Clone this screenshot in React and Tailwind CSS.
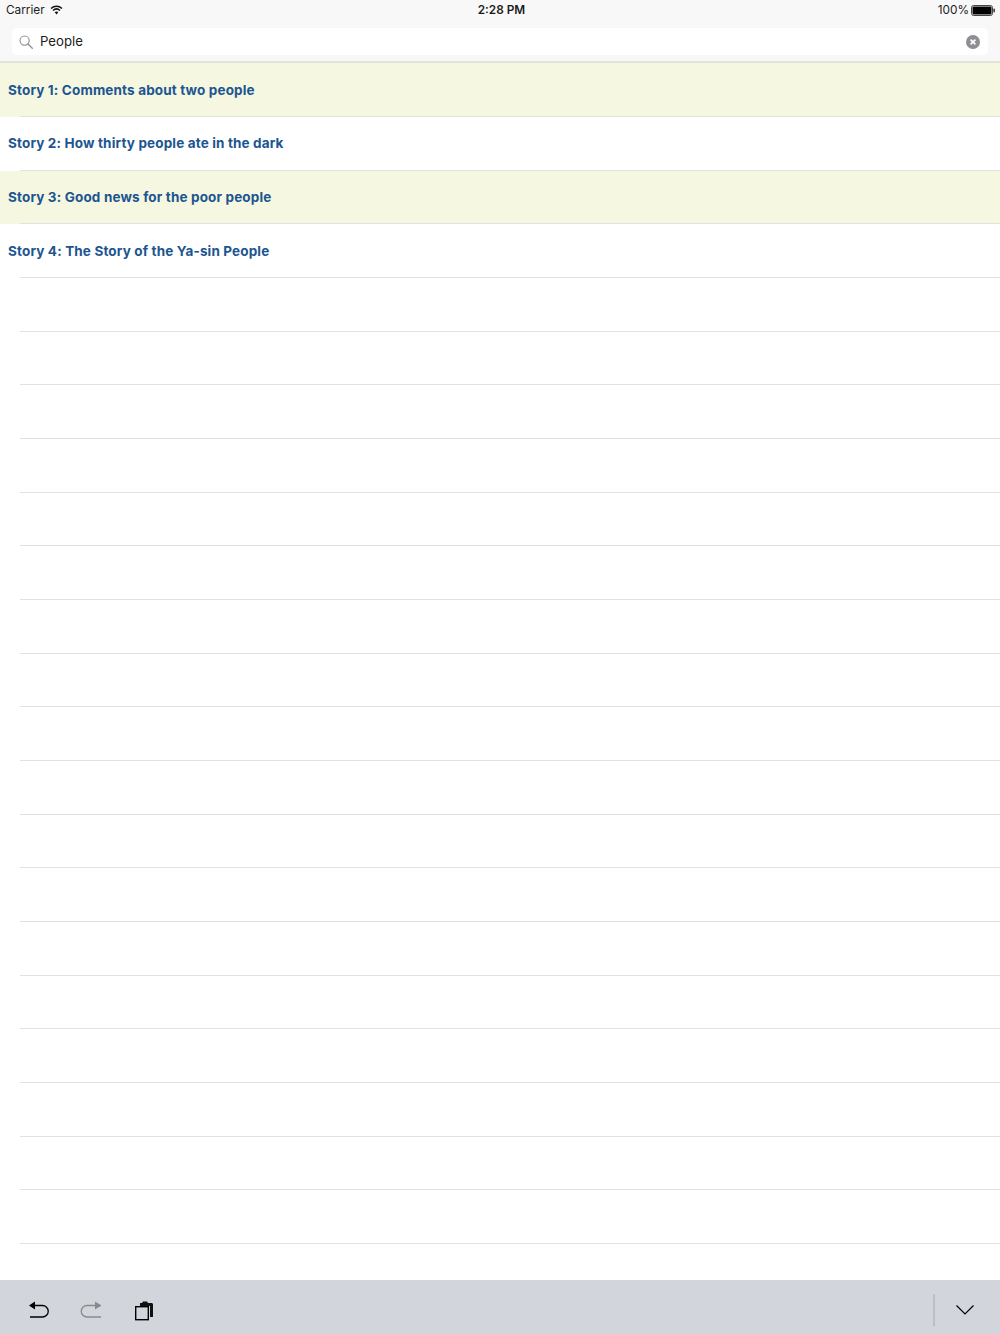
const STORIES = [
  'Story 1: Comments about two people',
  'Story 2: How thirty people ate in the dark',
  'Story 3: Good news for the poor people',
  'Story 4: The Story of the Ya-sin People',
];

// empty rows still draw their separators
const ROWS = Array.from({ length: 22 }, (_, i) => STORIES[i] || '');

function StatusBar() {
  return (
    <div className="flex h-[21px] items-center justify-between pl-[6px] pr-[5px] pt-[1px] text-[11.8px] text-[#1c1c1c]">
      <div className="flex w-[200px] items-center gap-[5px]">
        <span>Carrier</span>
        <svg width="13" height="10" viewBox="0 0 14 11" className="mb-[2px]">
          <path d="M1 3.8C4.400.6 9.600.6 13 3.800" fill="none" stroke="#111" strokeWidth="1.700" />
          <path d="M3.200 6c2.200-2 5.400-2 7.600 0" fill="none" stroke="#111" strokeWidth="1.700" />
          <path d="M5 8c1.100-1 2.900-1 4 0l-2 2.500z" fill="#111" />
        </svg>
      </div>
      <span className="ml-[2px] font-semibold">2:28 PM</span>
      <div className="flex w-[200px] items-center justify-end gap-[2px]">
        <span>100%</span>
        <svg width="24" height="11" viewBox="0 0 24 11" className="mb-[1px]">
          <rect x="0.500" y="0.500" width="21" height="10" rx="2" fill="#fff" stroke="#444" />
          <rect x="1.500" y="1.500" width="19" height="8" rx="1" fill="#000" />
          <rect x="22.400" y="3.500" width="1.500" height="4" rx="0.700" fill="#333" />
        </svg>
      </div>
    </div>
  );
}

function SearchBar() {
  return (
    <div className="border-b-2 border-[#e2e3da] px-[12px] pb-[6.3px] pt-[7px]">
      <div className="flex h-[27px] items-center rounded-[5px] bg-white pl-[7px] pr-[8px]">
        <svg width="14" height="14" viewBox="0 0 14 14">
          <circle cx="5.600" cy="5.600" r="4.600" fill="none" stroke="#8e8e93" strokeWidth="1.100" />
          <path d="M9 9l4.300 4.300" stroke="#8e8e93" strokeWidth="1.300" strokeLinecap="round" />
        </svg>
        <span className="ml-[7px] flex-1 text-[13.2px] text-[#1c1c1c]">People</span>
        <svg width="14" height="14" viewBox="0 0 14 14">
          <circle cx="7" cy="7" r="7" fill="#8e8e93" />
          <path d="M4.600 4.600l4.800 4.800M9.400 4.600l-4.800 4.800" stroke="#fff" strokeWidth="1.700" />
        </svg>
      </div>
    </div>
  );
}

function Row({ title, index }) {
  const shaded = title && index % 2 === 0;
  return (
    <div className={`flex h-[53.68px] shrink-0 flex-col ${shaded ? 'bg-[#f5f7e1]' : 'bg-white'}`}>
      <div className="flex flex-1 items-center pl-[8px] text-[13.5px] font-bold tracking-[0.15px] text-[#1c5590]">
        {title}
      </div>
      <div className="ml-[20px] h-px bg-[#e2e3df]" />
    </div>
  );
}

function Toolbar() {
  return (
    <div className="flex h-[54px] shrink-0 items-center bg-[#d2d5db] pl-[29px] pr-[26px] pt-[6px]">
      <svg width="20" height="20" viewBox="0 0 20 20">
        <path d="M2 5.500h11.500a5 5 0 0 1 0 11.500H1" fill="none" stroke="#000" strokeWidth="1.300" />
        <path d="M0 5.500L6 1.500v8z" fill="#000" />
      </svg>
      <svg width="22" height="20" viewBox="0 0 22 20" className="ml-[31px]">
        <path d="M20 5.500H7a5 5 0 0 0 0 11.500h14" fill="none" stroke="#8a8a8a" strokeWidth="1.300" />
        <path d="M21.500 5.500L15 1.500v8z" fill="#8a8a8a" />
      </svg>
      <svg width="20" height="21" viewBox="0 0 20 21" className="ml-[32px]">
        <path d="M6 3h2l1-1.500h4L14 3h3.500c.8 0 1.500.7 1.500 1.500V17h-3V6H6z" fill="#111" />
        <rect x="1.700" y="6.700" width="12.600" height="13" fill="none" stroke="#000" strokeWidth="1.400" />
      </svg>
      <div className="ml-auto h-[32px] w-[2px] bg-[#bcbfc4]" />
      <svg width="18" height="10" viewBox="0 0 18 10" className="ml-[21px]">
        <path d="M.5.5L9 9 17.500.5" fill="none" stroke="#000" strokeWidth="1.200" />
      </svg>
    </div>
  );
}

export default function App() {
  return (
    <div className="flex h-[1334px] w-[1000px] flex-col overflow-hidden bg-white font-['Inter',sans-serif]">
      <div className="bg-[#f8f8f8]">
        <StatusBar />
        <SearchBar />
      </div>
      <div className="flex flex-1 flex-col overflow-hidden">
        {ROWS.map((title, i) => (
          <Row key={i} title={title} index={i} />
        ))}
      </div>
      <Toolbar />
    </div>
  );
}
